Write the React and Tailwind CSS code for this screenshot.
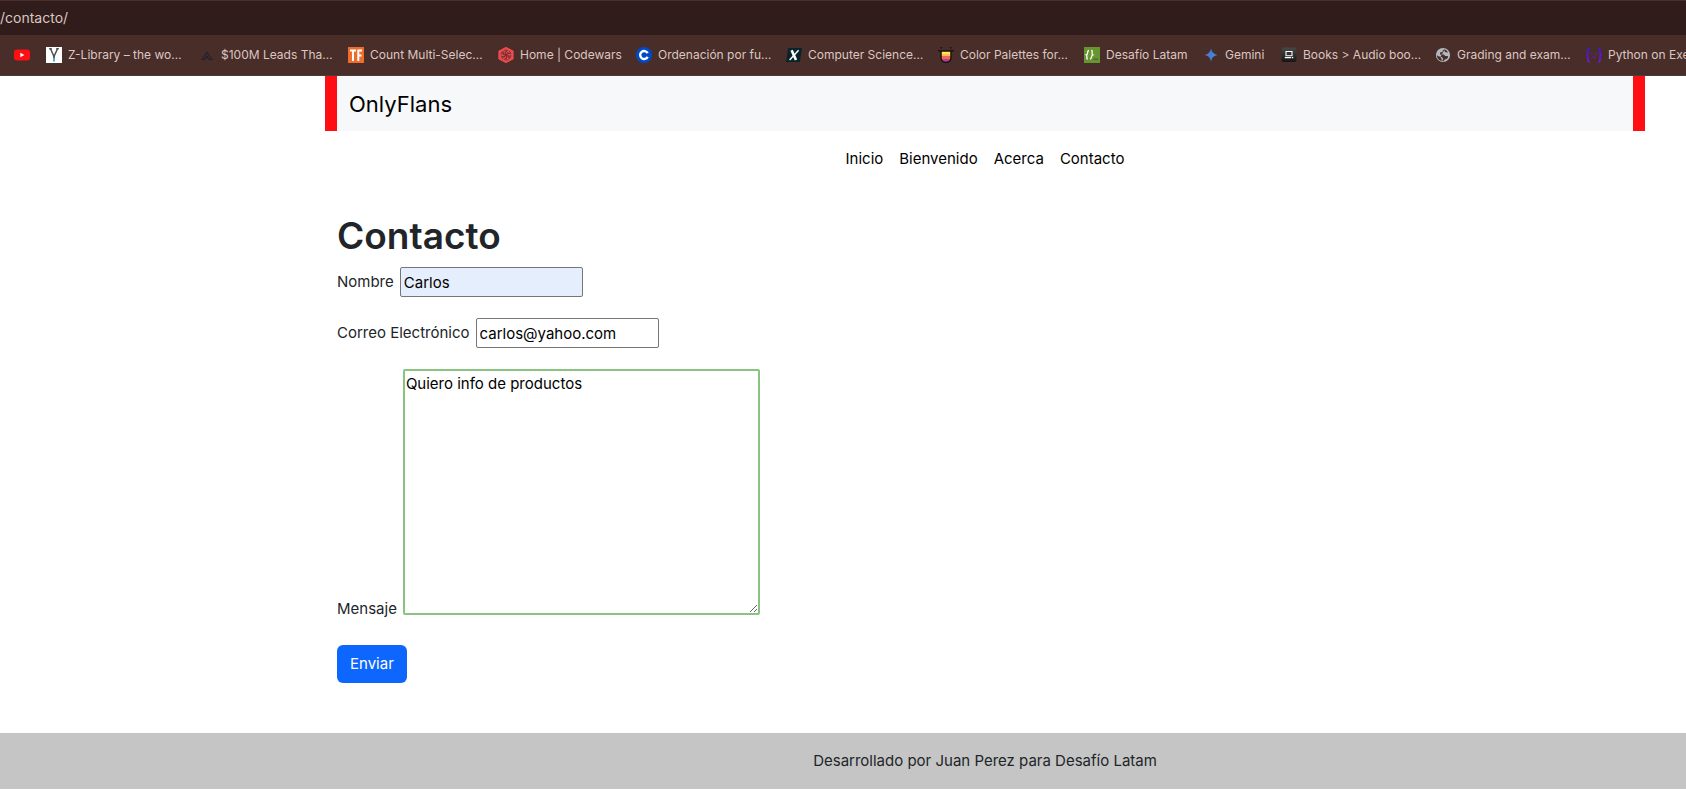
import React from "react";

const icons = {
  youtube: (
    <svg viewBox="0 0 16 16" className="size-4">
      <rect x="0" y="2.5" width="16" height="11" rx="3" fill="#ff0f14" />
      <path d="M6.3 5.8v4.4L10.4 8z" fill="#fff" />
    </svg>
  ),
  zlib: (
    <svg viewBox="0 0 16 16" className="size-4">
      <rect width="16" height="16" fill="#fff" />
      <path d="M3.2 1.800h2.600M10.200 1.800h2.600M4.600 2 8 9.500l3.400-7.500" fill="none" stroke="#4a4f55" strokeWidth="1.5" />
      <path d="M8 8.5V13" stroke="#4a4f55" strokeWidth="1.6" />
      <path d="M8 11v3.5" stroke="#49afd9" strokeWidth="2" />
    </svg>
  ),
  leads: (
    <svg viewBox="0 0 16 16" className="size-4">
      <path d="M1.800 12.500h4.200M10 12.500h4.200M3.800 11.800 8 5.200l4.200 6.600M6 12.200 8 9l2 3.200" fill="none" stroke="#221f30" strokeWidth="1.1" />
    </svg>
  ),
  tf: (
    <svg viewBox="0 0 16 16" className="size-4">
      <rect width="16" height="16" fill="#ee6c2c" />
      <path d="M2 3.4h6M5 3.4V14M10.3 14V3.4H14M10.3 8.4h3.2" fill="none" stroke="#fff" strokeWidth="2" />
    </svg>
  ),
  codewars: (
    <svg viewBox="0 0 16 16" className="size-4">
      <path d="M8 .3 15.2 4v8L8 15.7.8 12V4z" fill="#ef4b4f" stroke="#ef4b4f" strokeWidth=".8" strokeLinejoin="round" />
      <g fill="none" stroke="#4a2b29" strokeWidth=".7">
        <circle cx="8" cy="8" r="5" strokeDasharray="3.2 2" />
        {[0, 60, 120, 180, 240, 300].map((angle) => (
          <path key={angle} d="M8 8C7 6.400 7.500 4 10 3.400M8.600 6.500c1-.9 2.400-.8 3.300.2" transform={`rotate(${angle} 8 8)`} />
        ))}
      </g>
    </svg>
  ),
  c: (
    <svg viewBox="0 0 16 16" className="size-4">
      <circle cx="8" cy="8" r="8" fill="#0049c8" />
      <path d="M11.7 6.1a4 4 0 1 0 0 3.8" fill="none" stroke="#fff" strokeWidth="2.4" />
    </svg>
  ),
  x: (
    <svg viewBox="0 0 16 16" className="size-4">
      <path d="M2.2 1H16l-2.2 14H0z" fill="#082329" />
      <path d="M5.6 3.2 10 13" stroke="#fff" strokeWidth="2.6" />
      <path d="M12.6 3.2 3.6 13" stroke="#fff" strokeWidth="1.5" />
    </svg>
  ),
  palette: (
    <svg viewBox="0 0 16 16" className="size-4">
      <path d="M3.4 4h9.2v3.4H3.4z" fill="#ffe45c" />
      <path d="M3.4 7h9.2v2H3.4z" fill="#ffc24a" />
      <path d="M3.4 9h9.2v1.5c0 .9-.3 1.6-.8 2.2H4.2c-.5-.6-.8-1.3-.8-2.2z" fill="#fb6258" />
      <path d="M4 12.2h8C11.2 13.9 9.8 14.9 8 14.9S4.8 13.9 4 12.2z" fill="#9a45a5" />
      <path d="M0 3.7c1 .3 2 .3 3 .3h10c1 0 2 0 3-.3M3 4v6.5c0 3 2.2 4.9 5 4.9s5-1.9 5-4.9V4" fill="none" stroke="#17110f" strokeWidth="1.3" />
      <path d="M2.5.8h1.5M12 .8h1.500" stroke="#17110f" strokeWidth="1.4" />
    </svg>
  ),
  desafio: (
    <svg viewBox="0 0 16 16" className="size-4">
      <rect width="16" height="16" fill="#67962f" />
      <path d="M5 3.5c-1.4 0-1.2 1-1.4 2.3S3.3 7.500 2.400 7.800c.8.3.7 1 .5 2.200s-.1 2 .9 2M7.200 3.500c1.300 0 1.100 1.100.9 2.300s0 1.700.7 2c-1 .3-1.100 1.100-1.300 2.200S7 12 6 12" fill="none" stroke="#fff" strokeWidth="1.3" />
      <path d="M9.5 12.2H14" stroke="#4a6d52" strokeWidth="1.6" />
    </svg>
  ),
  gemini: (
    <svg viewBox="0 0 16 16" className="size-4">
      <defs>
        <linearGradient id="gemini-fill" x1="0" x2="1" y1="0.5" y2="0.5">
          <stop offset="0" stopColor="#8a63b8" />
          <stop offset=".5" stopColor="#3f7fd8" />
          <stop offset="1" stopColor="#4c8fd9" />
        </linearGradient>
      </defs>
      <path d="M8 1.500C8.700 5.200 10.800 7.300 14.500 8 10.800 8.700 8.700 10.800 8 14.500 7.300 10.800 5.200 8.700 1.500 8 5.200 7.300 7.300 5.200 8 1.500z" fill="url(#gemini-fill)" />
    </svg>
  ),
  books: (
    <svg viewBox="0 0 16 16" className="size-4">
      <defs>
        <linearGradient id="books-fill" x1="0" x2="0" y1="0" y2="1">
          <stop offset="0" stopColor="#484848" />
          <stop offset="1" stopColor="#151515" />
        </linearGradient>
      </defs>
      <rect x=".5" y=".5" width="15" height="14.5" rx="2" fill="url(#books-fill)" />
      <path d="M5 4.5h6v4.200H5zM3.800 10.600h6.400M11 10.600h1.300" fill="none" stroke="#fff" strokeWidth="1.1" />
    </svg>
  ),
  globe: (
    <svg viewBox="0 0 16 16" className="size-4">
      <circle cx="8" cy="8" r="7.100" fill="#b2b8bd" />
      <path d="M9.800 2.300 7.600 3.500v1.400l-2.600.6v2h3.800l1.400 1.400 2.700.2v1.700l-1.300 1.300-1.800.3-1.200 1.900-1.600-.2 1.300-2.200-1.500-2-3.600-.6L1.900 8a6.100 6.100 0 0 0 4.300 5.900l.6-1.300-1.400-2.700z" fill="#4a2e2a" />
      <path d="M9.500 2.200c-.4 1.600.2 2.700 1.500 3.100l2 .3a6 6 0 0 0-3.500-3.400z" fill="#4a2e2a" />
    </svg>
  ),
  python: (
    <svg viewBox="0 0 16 16" className="size-4">
      <defs>
        <linearGradient id="python-stroke" gradientUnits="userSpaceOnUse" x1="0" x2="0" y1="0" y2="16">
          <stop offset="0" stopColor="#3c12f2" />
          <stop offset="1" stopColor="#8410ee" />
        </linearGradient>
      </defs>
      <g fill="none" stroke="url(#python-stroke)" strokeWidth="1.5">
        <path d="M3.800.9C2.300.9 2 1.500 2 2.900v2.500C2 7 1.600 7.800.5 8c1.100.2 1.500 1 1.500 2.600v2.500c0 1.400.3 2 1.800 2M12.200.9c1.500 0 1.800.6 1.800 2v2.500c0 1.600.4 2.400 1.500 2.600-1.100.2-1.500 1-1.500 2.600v2.500c0 1.400-.3 2-1.800 2" />
        <path d="M4.300 7.200 5.500 6.300l1.200.9M9.300 7.200l1.200-.9 1.200.9M6.500 10c.8.900 2.200.9 3 0" strokeWidth="1" />
      </g>
    </svg>
  ),
};

const bookmarks = [
  { icon: "youtube", label: "", name: "YouTube", width: "w-8" },
  { icon: "zlib", label: "Z-Library – the wo…", width: "w-[153px]" },
  { icon: "leads", label: "$100M Leads Tha…", width: "w-[149px]" },
  { icon: "tf", label: "Count Multi-Selec…", width: "w-[150px]" },
  { icon: "codewars", label: "Home | Codewars", width: "w-[138px]" },
  { icon: "c", label: "Ordenación por fu…", width: "w-[150px]" },
  { icon: "x", label: "Computer Science…", width: "w-[152px]" },
  { icon: "palette", label: "Color Palettes for…", width: "w-[146px]" },
  { icon: "desafio", label: "Desafío Latam", width: "w-[119px]" },
  { icon: "gemini", label: "Gemini", width: "w-[78px]" },
  { icon: "books", label: "Books > Audio boo…", width: "w-[154px]" },
  { icon: "globe", label: "Grading and exam…", width: "w-[151px]" },
  { icon: "python", label: "Python on Exe…", width: "w-[150px]" },
];

const links = ["Inicio", "Bienvenido", "Acerca", "Contacto"];

export default function App() {
  return (
    <div className="min-h-screen overflow-x-hidden bg-white font-[Inter,sans-serif] text-[15px] leading-6 text-[#212529]">
      <div className="flex h-[35px] items-center border-t border-[#4a2e2a] bg-[#301d1b] text-sm text-[#dcc6c2]">
        /contacto/
      </div>
      <nav aria-label="Marcadores" className="flex h-[41px] overflow-hidden border-b border-[#4a3c39] bg-[#482d29] pl-3.5">
        {bookmarks.map(({ icon, label, name, width }) => (
          <a
            key={icon}
            href="#"
            aria-label={name}
            className={`flex shrink-0 items-center gap-1.5 whitespace-nowrap text-xs text-[#dcc6c2] ${width}`}
          >
            {icons[icon]}
            {label}
          </a>
        ))}
      </nav>

      <div className="pl-[284px]">
        <div className="mx-auto max-w-[1320px]">
          <header className="flex h-[55px] items-center border-x-12 border-[#ff0f14] bg-[#f7f8fa] px-3">
            <a href="#" className="text-[22px] text-black">OnlyFlans</a>
          </header>
          <nav aria-label="Principal" className="flex h-14 items-center justify-center gap-4 text-black">
            {links.map((link) => (
              <a key={link} href="#">{link}</a>
            ))}
          </nav>
          <main className="px-3 pt-6 pb-[50px]">
            <h1 className="mb-1.5 text-[37px] leading-[50px] font-semibold">Contacto</h1>
            <form className="flex flex-col items-start" onSubmit={(e) => e.preventDefault()}>
              <div className="mb-[21px] flex items-center gap-1.5">
                <label htmlFor="nombre">Nombre</label>
                <input
                  id="nombre"
                  type="text"
                  defaultValue="Carlos"
                  className="h-[30px] w-[183px] rounded-xs border border-[#767676] bg-[#e5eefd] px-[3px] text-black outline-none"
                />
              </div>
              <div className="mb-[21px] flex items-center gap-1.5">
                <label htmlFor="correo">Correo Electrónico</label>
                <input
                  id="correo"
                  type="email"
                  defaultValue="carlos@yahoo.com"
                  className="h-[30px] w-[183px] rounded-xs border border-[#767676] bg-white px-[3px] text-black outline-none"
                />
              </div>
              <div className="mb-[30px] flex items-end gap-1.5">
                <label htmlFor="mensaje" className="leading-3">Mensaje</label>
                <textarea
                  id="mensaje"
                  defaultValue="Quiero info de productos"
                  className="h-[246px] w-[357px] resize rounded-xs border-2 border-[#88c47f] bg-white p-px text-black outline-none"
                />
              </div>
              <button type="submit" className="rounded-md bg-[#0d66fd] px-[13px] py-[7px] text-white">
                Enviar
              </button>
            </form>
          </main>
        </div>
      </div>
      <footer className="flex h-14 items-center justify-center bg-[#c5c5c5] pl-[284px]">
        Desarrollado por Juan Perez para Desafío Latam
      </footer>
    </div>
  );
}
